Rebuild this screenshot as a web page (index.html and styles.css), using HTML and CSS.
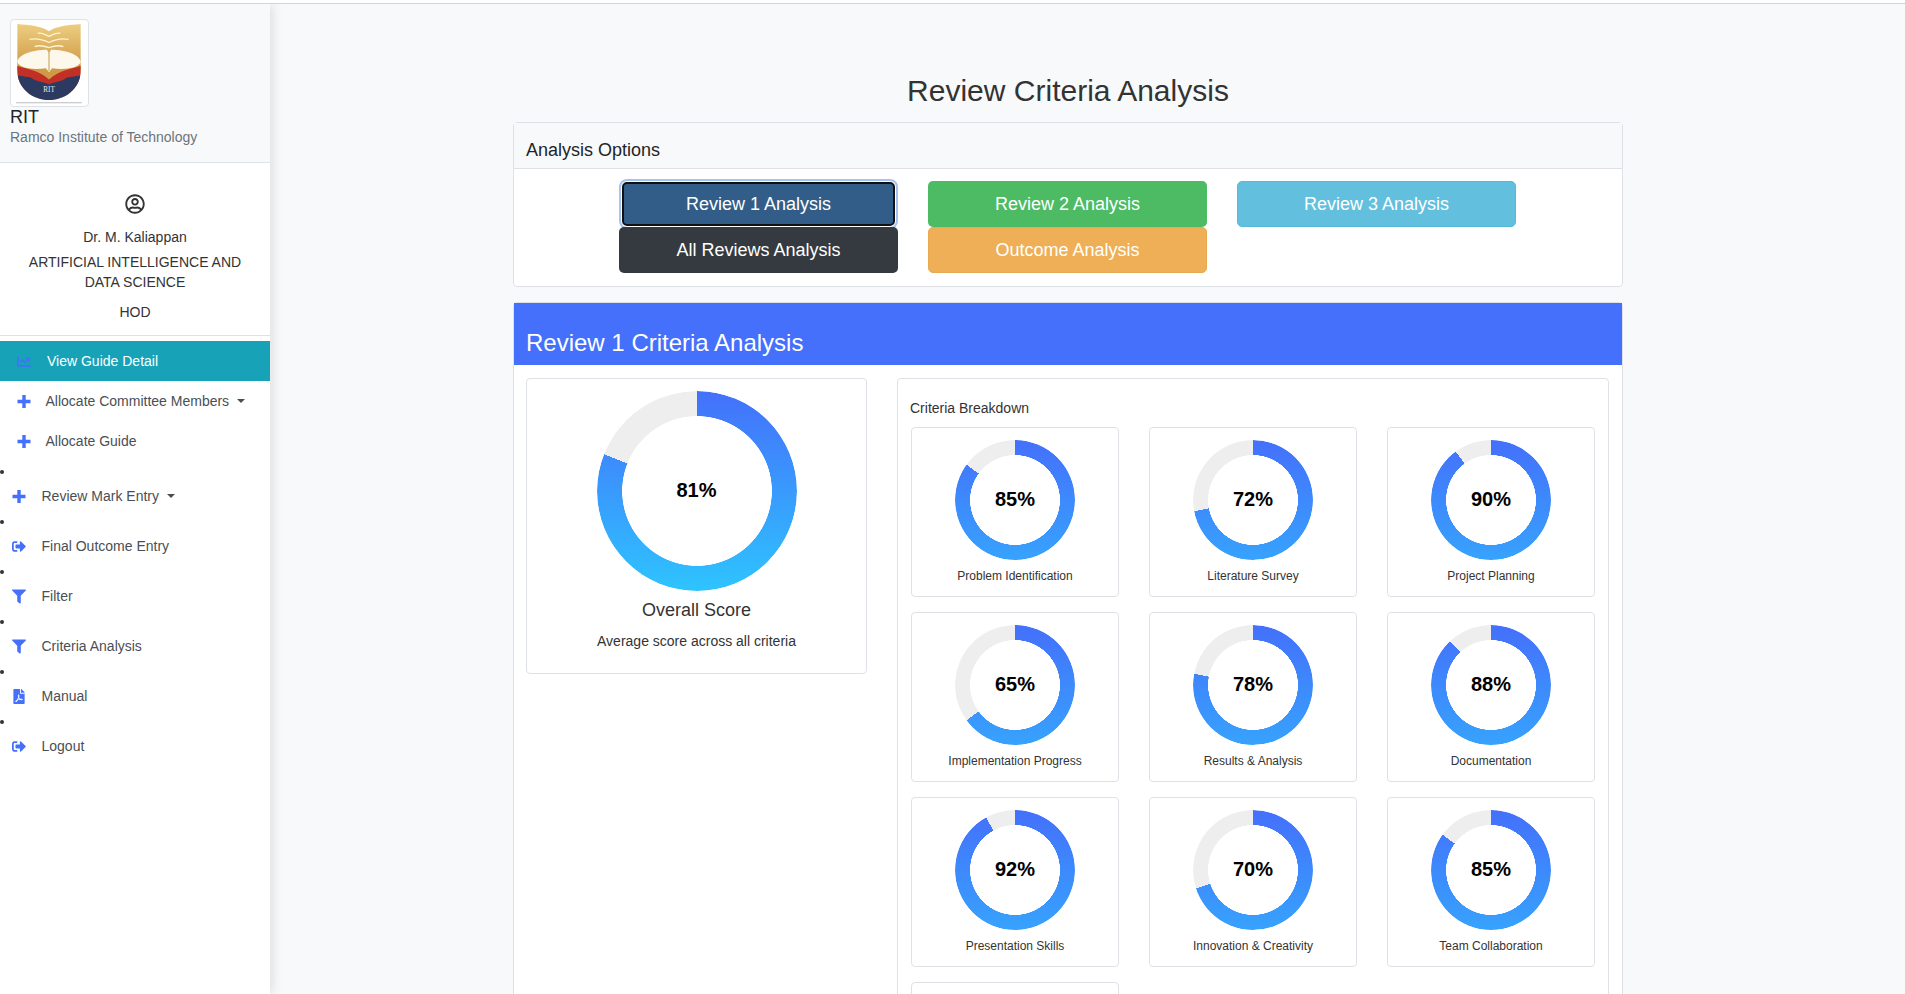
FILE: index.html
```html
<!DOCTYPE html>
<html lang="en">
<head>
    <meta charset="UTF-8">
    <meta name="viewport" content="width=device-width, initial-scale=1.0">
    <title>Review Criteria Analysis</title>
    <link rel="stylesheet" href="styles.css">
</head>
<body>
    <aside class="sidebar">
        <div class="brand">
            <div class="thumb">
                <svg viewBox="2 2 62 76" width="66" height="78">
                    <defs>
                        <linearGradient id="gold" x1="0" y1="0" x2="0" y2="1">
                            <stop offset="0" stop-color="#efd083"/>
                            <stop offset="0.55" stop-color="#cf9a48"/>
                        </linearGradient>
                        <clipPath id="shield">
                            <path d="M2 2 C14 3 26 4 33 9 C40 4 52 3 64 2 V46 C64 66 48 76 33 76 C18 76 2 66 2 46 Z"/>
                        </clipPath>
                    </defs>
                    <g clip-path="url(#shield)">
                        <rect width="66" height="78" fill="url(#gold)"/>
                        <path d="M0 42 C10 46 22 46 33 56 C44 46 56 46 66 42 V62 H0 Z" fill="#c22f27"/>
                        <path d="M0 52 C12 54 24 54 33 60 C42 54 54 54 66 52 V78 H0 Z" fill="#2c3a62"/>
                        <path d="M14 53 C22 52 29 54 33 58 C37 54 44 52 52 53 C46 59 38 58 33 61 C28 58 20 59 14 53 Z" fill="#c22f27"/>
                    </g>
                    <path d="M2 39 C3 32 16 27 31 27 L33 31 L35 27 C50 27 63 32 64 39 C62 45 48 47 36 45 L33 49 L30 45 C18 47 4 45 2 39 Z" fill="#fdf8ec"/>
                    <path d="M33 30 V48" stroke="#d8bd80" stroke-width="1.5"/>
                    <path d="M22 11 C27 10 30 13 33 14 C36 13 39 10 44 11 M14 17 C23 15 29 18 33 20 C37 18 43 15 52 17 M19 24 C25 22 30 24 33 25 C36 24 41 22 47 24" fill="none" stroke="#fff3d0" stroke-width="1.3"/>
                    <text x="33" y="68" class="crest-text">RIT</text>
                    <path d="M1 78.700 H65" stroke="#bdbdbd" stroke-width="1"/>
                </svg>
            </div>
            <div class="brand-name">RIT</div>
            <div class="brand-sub">Ramco Institute of Technology</div>
        </div>

        <div class="profile">
            <svg class="profile-icon" viewBox="0 0 496 512" width="20" height="20">
                <path fill="#333" d="M248 104c-53 0-96 43-96 96s43 96 96 96 96-43 96-96-43-96-96-96zm0 144c-26.500 0-48-21.500-48-48s21.500-48 48-48 48 21.500 48 48-21.500 48-48 48zm0-240C111 8 0 119 0 256s111 248 248 248 248-111 248-248S385 8 248 8zm0 448c-49.700 0-95.100-18.300-130.100-48.400 14.900-23 40.400-38.500 69.600-39.500 20.800 6.400 40.600 9.600 60.500 9.600s39.700-3.100 60.500-9.600c29.200 1.100 54.700 16.500 69.600 39.500-35 30.100-80.400 48.400-130.100 48.400zm162.700-84.100c-24.400-31.400-62.100-51.900-105.100-51.900-10.200 0-26 9.600-57.600 9.600-31.500 0-47.400-9.600-57.600-9.600-42.900 0-80.600 20.500-105.100 51.900C61.900 339.200 48 299.200 48 256c0-110.300 89.700-200 200-200s200 89.700 200 200c0 43.200-13.900 83.200-37.300 115.900z"/>
            </svg>
            <p class="profile-name">Dr. M. Kaliappan</p>
            <p class="profile-dept">ARTIFICIAL INTELLIGENCE AND DATA SCIENCE</p>
            <p class="profile-role">HOD</p>
        </div>

        <nav class="nav-top">
            <a class="nav-link active" href="#">
                <svg class="icon" viewBox="0 0 512 512"><path d="M496 384H64V80c0-8.840-7.160-16-16-16H16C7.160 64 0 71.160 0 80v336c0 17.670 14.330 32 32 32h464c8.840 0 16-7.160 16-16v-32c0-8.840-7.160-16-16-16zM464 96H345.940c-21.380 0-32.090 25.850-16.970 40.970l32.400 32.400L288 242.750l-73.370-73.370c-12.500-12.500-32.760-12.500-45.250 0l-68.690 68.690c-6.250 6.250-6.250 16.380 0 22.630l22.620 22.620c6.250 6.250 16.380 6.250 22.630 0L192 237.250l73.370 73.370c12.500 12.500 32.760 12.500 45.250 0l96-96 32.400 32.400c15.120 15.120 40.970 4.410 40.970-16.970V112c.01-8.840-7.150-16-15.990-16z"/></svg>
                View Guide Detail
            </a>
            <a class="nav-link" href="#">
                <svg class="icon" viewBox="0 0 14 14"><path d="M5.300 0.500h3.400v4.800h4.800v3.400H8.700v4.800H5.300V8.700H0.500V5.300h4.800z"/></svg>
                Allocate Committee Members <span class="caret"></span>
            </a>
            <a class="nav-link" href="#">
                <svg class="icon" viewBox="0 0 14 14"><path d="M5.300 0.500h3.400v4.800h4.800v3.400H8.700v4.800H5.300V8.700H0.500V5.300h4.800z"/></svg>
                Allocate Guide
            </a>
        </nav>

        <ul class="nav-list">
            <li><a href="#">
                <svg class="icon" viewBox="0 0 14 14"><path d="M5.300 0.500h3.400v4.800h4.800v3.400H8.700v4.800H5.300V8.700H0.500V5.300h4.800z"/></svg>
                Review Mark Entry <span class="caret"></span>
            </a></li>
            <li><a href="#">
                <svg class="icon" viewBox="0 0 512 512"><path d="M497 273L329 441c-15 15-41 4.500-41-17v-96H152c-13.300 0-24-10.700-24-24v-96c0-13.300 10.700-24 24-24h136V88c0-21.400 25.900-32 41-17l168 168c9.300 9.400 9.300 24.600 0 34zM192 436v-40c0-6.600-5.400-12-12-12H96c-17.700 0-32-14.300-32-32V160c0-17.700 14.300-32 32-32h84c6.600 0 12-5.400 12-12V76c0-6.600-5.400-12-12-12H96c-53 0-96 43-96 96v192c0 53 43 96 96 96h84c6.600 0 12-5.400 12-12z"/></svg>
                Final Outcome Entry
            </a></li>
            <li><a href="#">
                <svg class="icon" viewBox="0 0 512 512"><path d="M487.976 0H24.028C2.710 0-8.047 25.866 7.058 40.971L192 225.941V432c0 7.831 3.821 15.170 10.237 19.662l80 55.980C298.020 518.690 320 507.493 320 487.980V225.941l184.947-184.970C520.021 25.896 509.338 0 487.976 0z"/></svg>
                Filter
            </a></li>
            <li><a href="#">
                <svg class="icon" viewBox="0 0 512 512"><path d="M487.976 0H24.028C2.710 0-8.047 25.866 7.058 40.971L192 225.941V432c0 7.831 3.821 15.170 10.237 19.662l80 55.980C298.020 518.690 320 507.493 320 487.980V225.941l184.947-184.970C520.021 25.896 509.338 0 487.976 0z"/></svg>
                Criteria Analysis
            </a></li>
            <li><a href="#">
                <svg class="icon" viewBox="0 0 384 512"><path d="M181.900 256.100c-5-16-4.900-46.900-2-46.900 8.400 0 7.600 36.900 2 46.900zm-1.700 47.200c-7.700 20.200-17.300 43.300-28.400 62.700 18.300-7 39-17.200 62.900-21.900-12.700-9.600-24.900-23.400-34.500-40.800zM86.100 428.100c0 .8 13.200-5.400 34.900-40.200-6.700 6.300-29.100 24.500-34.900 40.200zM248 160h136v328c0 13.300-10.700 24-24 24H24c-13.300 0-24-10.700-24-24V24C0 10.700 10.700 0 24 0h200v136c0 13.200 10.800 24 24 24zm-8 171.800c-20-12.200-33.300-29-42.700-53.800 4.500-18.500 11.600-46.600 6.200-64.200-4.700-29.400-42.400-26.500-47.800-6.800-5 18.300-.4 44.100 8.100 77-11.600 27.600-28.700 64.600-40.800 85.800-.1 0-.1.100-.2.100-27.100 13.900-73.600 44.500-54.500 68 5.600 6.900 16 10 21.500 10 17.900 0 35.700-18 61.100-61.800 25.800-8.500 54.100-19.100 79-23.200 21.700 11.800 47.100 19.500 64 19.500 29.200 0 31.200-32 19.700-43.400-13.900-13.600-54.300-9.700-73.600-7.200zM377 105L279 7c-4.500-4.500-10.600-7-17-7h-6v128h128v-6.100c0-6.300-2.500-12.400-7-16.900zm-74.100 255.300c4.100-2.700-2.500-11.900-42.800-9 37.100 15.800 42.800 9 42.800 9z"/></svg>
                Manual
            </a></li>
            <li><a href="#">
                <svg class="icon" viewBox="0 0 512 512"><path d="M497 273L329 441c-15 15-41 4.500-41-17v-96H152c-13.300 0-24-10.700-24-24v-96c0-13.300 10.700-24 24-24h136V88c0-21.400 25.900-32 41-17l168 168c9.300 9.400 9.300 24.600 0 34zM192 436v-40c0-6.600-5.400-12-12-12H96c-17.700 0-32-14.300-32-32V160c0-17.700 14.300-32 32-32h84c6.600 0 12-5.400 12-12V76c0-6.600-5.400-12-12-12H96c-53 0-96 43-96 96v192c0 53 43 96 96 96h84c6.600 0 12-5.400 12-12z"/></svg>
                Logout
            </a></li>
        </ul>
    </aside>

    <main class="content">
        <h1 class="page-title">Review Criteria Analysis</h1>

        <section class="card options">
            <h2 class="card-head">Analysis Options</h2>
            <div class="options-body">
                <button class="btn btn-review1">Review 1 Analysis</button>
                <button class="btn btn-review2">Review 2 Analysis</button>
                <button class="btn btn-review3">Review 3 Analysis</button>
                <button class="btn btn-all">All Reviews Analysis</button>
                <button class="btn btn-outcome">Outcome Analysis</button>
            </div>
        </section>

        <section class="card results">
            <h2 class="results-head">Review 1 Criteria Analysis</h2>
            <div class="results-body">
                <div class="overall">
                    <div class="ring ring-large" style="--pct: 81"><span>81%</span></div>
                    <h3 class="overall-title">Overall Score</h3>
                    <p class="overall-text">Average score across all criteria</p>
                </div>

                <div class="breakdown">
                    <h4 class="breakdown-title">Criteria Breakdown</h4>
                    <div class="criteria-grid">
                        <div class="criterion">
                            <div class="ring" style="--pct: 85"><span>85%</span></div>
                            <p>Problem Identification</p>
                        </div>
                        <div class="criterion">
                            <div class="ring" style="--pct: 72"><span>72%</span></div>
                            <p>Literature Survey</p>
                        </div>
                        <div class="criterion">
                            <div class="ring" style="--pct: 90"><span>90%</span></div>
                            <p>Project Planning</p>
                        </div>
                        <div class="criterion">
                            <div class="ring" style="--pct: 65"><span>65%</span></div>
                            <p>Implementation Progress</p>
                        </div>
                        <div class="criterion">
                            <div class="ring" style="--pct: 78"><span>78%</span></div>
                            <p>Results &amp; Analysis</p>
                        </div>
                        <div class="criterion">
                            <div class="ring" style="--pct: 88"><span>88%</span></div>
                            <p>Documentation</p>
                        </div>
                        <div class="criterion">
                            <div class="ring" style="--pct: 92"><span>92%</span></div>
                            <p>Presentation Skills</p>
                        </div>
                        <div class="criterion">
                            <div class="ring" style="--pct: 70"><span>70%</span></div>
                            <p>Innovation &amp; Creativity</p>
                        </div>
                        <div class="criterion">
                            <div class="ring" style="--pct: 85"><span>85%</span></div>
                            <p>Team Collaboration</p>
                        </div>
                        <div class="criterion"></div>
                    </div>
                </div>
            </div>
        </section>
    </main>
</body>
</html>
```

FILE: styles.css
```css
* {
    box-sizing: border-box;
}
html {
    height: 100%;
    overflow: hidden;
    background-color: #fff;
    border-top: 3px solid #fff;
}
body {
    margin: 0;
    height: 100%;
    display: flex;
    overflow: hidden;
    font-family: 'Liberation Sans', Arial, sans-serif;
    font-size: 14px;
    color: #333;
    background-color: #f8f9fa;
    border-top: 1px solid #d2d4d6;
}
.sidebar {
    flex: 0 0 270px;
    background-color: #fff;
    box-shadow: 3px 0 10px rgba(0, 0, 0, 0.1);
    color: #4a4f55;
}
.brand {
    height: 159px;
    padding: 15px 10px 0;
    background-color: #f8f9fa;
    border-bottom: 1px solid #dee2e6;
}
.thumb {
    width: 79px;
    height: 88px;
    padding: 4px 5px;
    background-color: #fff;
    border: 1px solid #dee2e6;
    border-radius: 4px;
}
.thumb svg {
    display: block;
    overflow: visible;
}
.crest-text {
    font-family: 'Liberation Serif', serif;
    font-size: 7px;
    fill: #e8e8ee;
    text-anchor: middle;
}
.brand-name {
    font-size: 18px;
    line-height: 21px;
    color: #212529;
}
.brand-sub {
    font-size: 14px;
    line-height: 19px;
    color: #6c757d;
}
.profile {
    height: 173px;
    padding: 31px 10px 0;
    text-align: center;
    color: #333;
    border-bottom: 1px solid #dee2e6;
}
.profile-icon {
    display: block;
    margin: 0 auto 13px;
}
.profile p {
    margin: 0;
    line-height: 20px;
}
.profile .profile-dept {
    margin-top: 5px;
}
.profile .profile-role {
    margin-top: 10px;
}
.nav-top {
    margin-top: 5px;
}
.nav-link {
    display: flex;
    align-items: center;
    height: 40px;
    padding-left: 17px;
    color: #4a4f55;
    text-decoration: none;
}
.nav-link .icon {
    margin-right: 14.5px;
}
.nav-link.active {
    background-color: #17a2b8;
    color: #fff;
}
.nav-link.active .icon {
    margin-right: 16px;
}
.icon {
    flex: 0 0 14px;
    width: 14px;
    height: 15px;
    fill: #4470fb;
}
.caret {
    width: 0;
    height: 0;
    margin-left: 8px;
    border-top: 4px solid #4a4f55;
    border-left: 4px solid transparent;
    border-right: 4px solid transparent;
}
.nav-list {
    list-style: none;
    margin: 9px 0 0;
    padding: 0;
}
.nav-list li {
    padding-bottom: 2px;
}
.nav-list li::before {
    content: '';
    display: block;
    width: 4px;
    height: 4px;
    border-radius: 50%;
    background-color: #333;
}
.nav-list a {
    display: flex;
    align-items: center;
    height: 44px;
    padding-left: 12px;
    color: #4a4f55;
    text-decoration: none;
}
.nav-list .icon {
    margin-right: 15.5px;
}
.content {
    width: 1110px;
    margin-left: 243px;
}
.page-title {
    margin: 0;
    padding-top: 69px;
    height: 118px;
    font-size: 30px;
    font-weight: 400;
    line-height: 36px;
    text-align: center;
}
.card {
    background-color: #fff;
    border: 1px solid #dee2e6;
    border-radius: 4px;
}
.options {
    height: 165px;
}
.card-head {
    margin: 0;
    height: 46px;
    padding: 15px 12px 0;
    font-size: 18px;
    font-weight: 400;
    line-height: 24px;
    color: #212529;
    background-color: #f8f9fa;
    border-bottom: 1px solid #dee2e6;
}
.options-body {
    display: grid;
    grid-template-columns: repeat(3, 279px);
    grid-auto-rows: 46px;
    column-gap: 30px;
    padding: 12px 0 0 105px;
}
.btn {
    font-family: inherit;
    font-size: 18px;
    color: #fff;
    border: 1px solid transparent;
    border-radius: 5px;
    padding: 0;
}
.btn-review1 {
    margin: 1px 3px;
    background-color: #325d88;
    border: 2px solid #111;
    box-shadow: 0 0 0 1px #fff, 0 0 0 3px #a6c2f2;
}
.btn-review2 {
    background-color: #4cbb64;
}
.btn-review3 {
    background-color: #62c0de;
    border-color: #56b9da;
}
.btn-all {
    background-color: #343a40;
}
.btn-outcome {
    background-color: #eeaf56;
    border-color: #e8a951;
}
.results {
    margin-top: 15px;
}
.results-head {
    margin: 0;
    height: 62px;
    padding: 22px 12px 0;
    font-size: 24px;
    font-weight: 400;
    line-height: 36px;
    color: #fff;
    background-color: #4470fb;
}
.results-body {
    display: flex;
    align-items: flex-start;
    gap: 30px;
    padding: 13px 12px;
}
.overall {
    flex: 0 0 341px;
    height: 296px;
    padding-top: 12px;
    text-align: center;
    border: 1px solid #dee2e6;
    border-radius: 4px;
}
.ring {
    position: relative;
    display: flex;
    align-items: center;
    justify-content: center;
    width: 120px;
    height: 120px;
    margin: 0 auto;
    padding-bottom: 2px;
    font-size: 20px;
    font-weight: 700;
    color: #000;
}
.ring::before {
    content: '';
    position: absolute;
    inset: 0;
    border-radius: 50%;
    background:
        conic-gradient(transparent calc(var(--pct) * 1%), #eee 0),
        linear-gradient(180deg, #4470fb 0, #2ec4ff 200px);
    -webkit-mask: radial-gradient(closest-side, transparent 74.6%, #000 75.2%);
    mask: radial-gradient(closest-side, transparent 74.6%, #000 75.2%);
}
.ring span {
    position: relative;
}
.ring-large {
    width: 200px;
    height: 200px;
}
.overall-title {
    margin: 9px 0 0;
    font-size: 18px;
    font-weight: 400;
    line-height: 21px;
}
.overall-text {
    margin: 10px 0 0;
    line-height: 21px;
}
.breakdown {
    flex: 0 0 712px;
    height: 640px;
    padding: 20px 13px 0;
    border: 1px solid #dee2e6;
    border-radius: 4px;
}
.breakdown-title {
    margin: 0 0 10px -1px;
    font-size: 14px;
    font-weight: 400;
    line-height: 18px;
}
.criteria-grid {
    display: grid;
    grid-template-columns: repeat(3, 208px);
    grid-auto-rows: 170px;
    column-gap: 30px;
    row-gap: 15px;
}
.criterion {
    padding-top: 12px;
    text-align: center;
    background-color: #fff;
    border: 1px solid #dee2e6;
    border-radius: 4px;
}
.criterion p {
    margin: 8px 0 0;
    font-size: 12px;
    line-height: 16px;
}
```
